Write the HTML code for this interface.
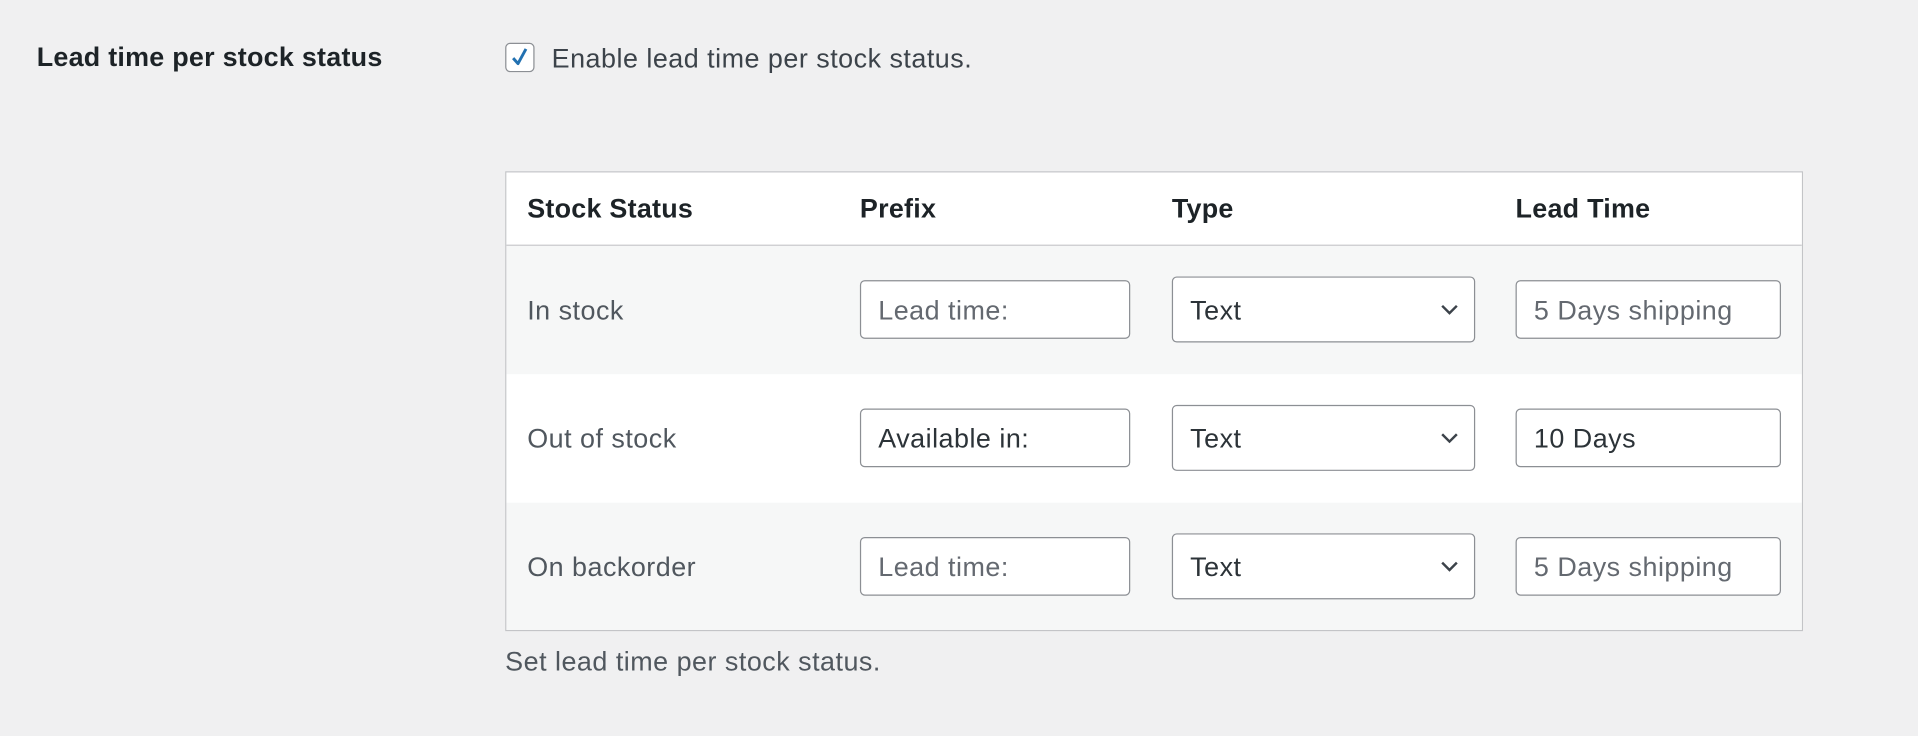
<!DOCTYPE html>
<html><head><meta charset="utf-8"><style>
html,body{margin:0;padding:0;background:#f0f0f1;width:1918px;height:736px;overflow:hidden}
#w{position:absolute;left:0;top:0;width:1568px;height:602px;transform:scale(1.22321);transform-origin:0 0;font-family:"Liberation Sans",sans-serif;color:#3c434a;letter-spacing:0.4px}
.a{position:absolute;white-space:nowrap}
.lbl{left:30px;top:34px;font-size:22px;font-weight:bold;color:#1d2327;letter-spacing:0.2px}
.cb{left:413px;top:35px;width:22px;height:22px;border:1px solid #8c8f94;border-radius:4px;background:#fff}
.en{left:451px;top:35px;font-size:22px}
.tbl{left:413px;top:140px;width:1059px;height:374px;border:1px solid #c3c4c7;background:#fff}
.hd{position:absolute;left:0;top:0;width:100%;height:59px;border-bottom:1px solid #c3c4c7;background:#fff}
.r{position:absolute;left:0;width:100%;height:105px}
.th{font-size:22px;font-weight:bold;color:#1d2327;top:17px;letter-spacing:0.2px}
.td{font-size:22px;color:#50575e}
.in{position:absolute;height:46px;border:1px solid #8c8f94;border-radius:4px;background:#fff;font-size:22px;line-height:47px;padding-left:14px;box-sizing:content-box}
.sel{position:absolute;height:52px;border:1px solid #8c8f94;border-radius:4px;background:#fff;font-size:22px;line-height:53px;padding-left:14px;color:#2c3338}
.ph{color:#646970}.val{color:#2c3338}
.ft{left:413px;top:528px;font-size:22px;color:#50575e}
</style></head><body><div id="w">
<div class="a lbl">Lead time per stock status</div>
<div class="a cb"><svg width="22" height="22" viewBox="0 0 22 22"><path d="M5.5 11.5 L9.5 16 L16 4" stroke="#2271b1" stroke-width="2.4" fill="none" stroke-linejoin="round"/></svg></div>
<div class="a en">Enable lead time per stock status.</div>
<div class="a tbl">
 <div class="hd">
  <div class="a th" style="left:17px">Stock Status</div>
  <div class="a th" style="left:289px">Prefix</div>
  <div class="a th" style="left:544px">Type</div>
  <div class="a th" style="left:825px">Lead Time</div>
 </div>
 <div class="r" style="top:60px;background:#f6f7f7">
  <div class="a td" style="left:17px;top:40px">In stock</div>
  <div class="in ph" style="left:289px;top:28px;width:205px">Lead time:</div>
  <div class="sel" style="left:544px;top:25px;width:232px">Text<svg style="position:absolute;right:12px;top:20px" width="16" height="12" viewBox="0 0 16 12"><path d="M2 3 L8 9 L14 3" stroke="#3c434a" stroke-width="2" fill="none"/></svg></div>
  <div class="in ph" style="left:825px;top:28px;width:201px">5 Days shipping</div>
 </div>
 <div class="r" style="top:165px;background:#fff">
  <div class="a td" style="left:17px;top:40px">Out of stock</div>
  <div class="in val" style="left:289px;top:28px;width:205px">Available in:</div>
  <div class="sel" style="left:544px;top:25px;width:232px">Text<svg style="position:absolute;right:12px;top:20px" width="16" height="12" viewBox="0 0 16 12"><path d="M2 3 L8 9 L14 3" stroke="#3c434a" stroke-width="2" fill="none"/></svg></div>
  <div class="in val" style="left:825px;top:28px;width:201px">10 Days</div>
 </div>
 <div class="r" style="top:270px;background:#f6f7f7;height:104px">
  <div class="a td" style="left:17px;top:40px">On backorder</div>
  <div class="in ph" style="left:289px;top:28px;width:205px">Lead time:</div>
  <div class="sel" style="left:544px;top:25px;width:232px">Text<svg style="position:absolute;right:12px;top:20px" width="16" height="12" viewBox="0 0 16 12"><path d="M2 3 L8 9 L14 3" stroke="#3c434a" stroke-width="2" fill="none"/></svg></div>
  <div class="in ph" style="left:825px;top:28px;width:201px">5 Days shipping</div>
 </div>
</div>
<div class="a ft">Set lead time per stock status.</div>
</div></body></html>
